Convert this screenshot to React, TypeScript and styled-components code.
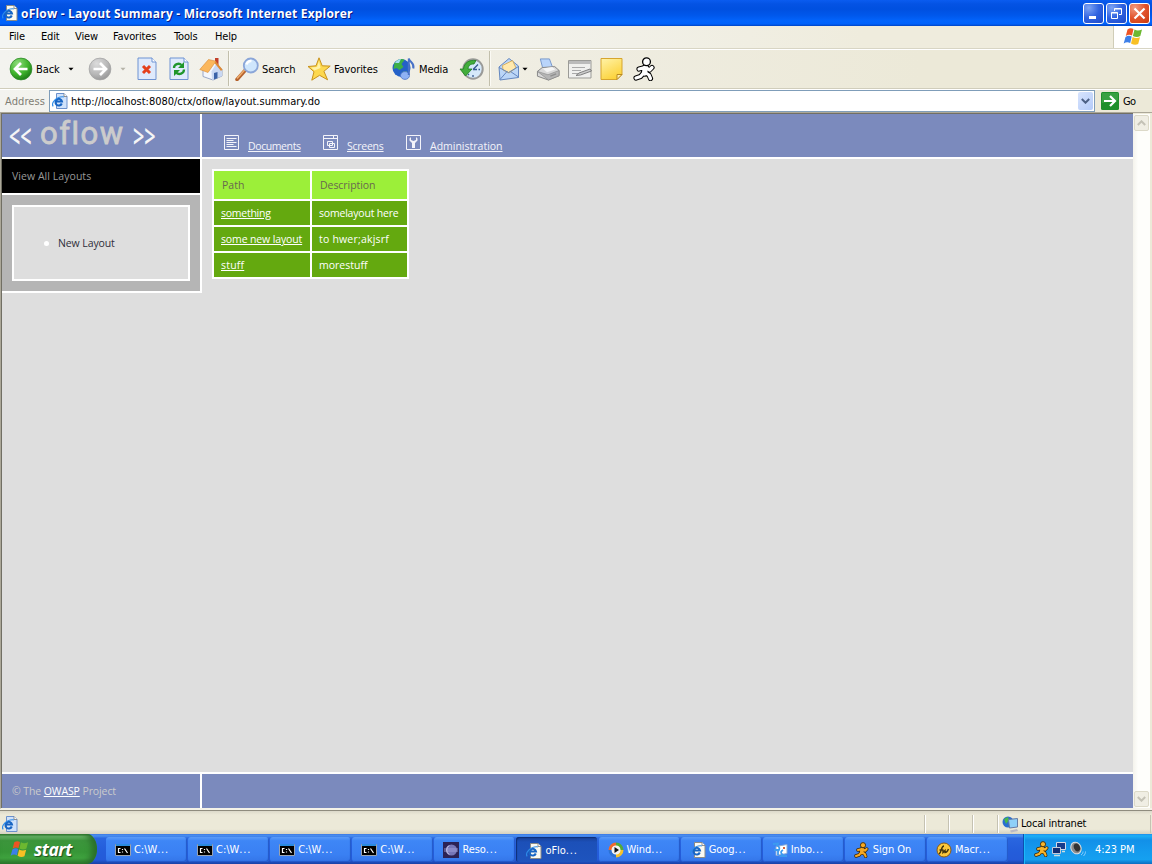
import React from "react";
import styled, { createGlobalStyle, css } from "styled-components";

const Global = createGlobalStyle`
  * { box-sizing: border-box; }
  body { margin: 0; background: #ece9d8; overflow: hidden; }
  svg { display: block; flex: none; }
`;

const ui = css`
  font-family: "DejaVu Sans Condensed", "DejaVu Sans", sans-serif;
  font-size: 11px;
  line-height: 14px;
  white-space: nowrap;
`;
const pageFont = css`
  font-family: "Open Sans", "Noto Sans", sans-serif;
  font-size: 10.5px;
  line-height: 14px;
  white-space: nowrap;
`;

const Screen = styled.div`
  width: 1152px; height: 864px; display: flex; flex-direction: column; overflow: hidden;
  ${ui}
`;

/* ---------- title bar ---------- */
const TitleBar = styled.header`
  height: 26px; flex: none; display: flex; align-items: center; padding: 0 2px 0 2px;
  background: linear-gradient(#0a5cf0 0, #0453e4 15%, #0050e0 35%, #0058ec 60%, #0264fc 80%, #0062fb 92%, #0044c4 100%);
`;
const Title = styled.h1`
  margin: 0 auto 0 3px; color: #fff; font: bold 12px/18px "Open Sans", sans-serif; letter-spacing: 0.2px;
  text-shadow: 1px 1px 0 #0a1883; white-space: nowrap; padding-top: 1px;
`;
const WinButton = styled.div<{ $close?: boolean }>`
  width: 21px; height: 21px; margin-left: 2px; border: 1px solid #fff; border-radius: 3px;
  background: ${p => p.$close
    ? "radial-gradient(circle at 25% 20%, #f09a80, #e2532c 50%, #c83a10)"
    : "radial-gradient(circle at 25% 20%, #7ea4f4, #2f62e0 50%, #1d49c8)"};
  display: flex; align-items: center; justify-content: center;
`;

/* ---------- menu ---------- */
const MenuBar = styled.nav`
  height: 22px; flex: none; display: flex; padding-left: 9px; align-items: center;
  background: linear-gradient(90deg, #f4f5f2, #f2f2ec 45%, #efecdd 75%); 
`;
const MenuItem = styled.span<{ $w: number }>`
  width: ${p => p.$w}px; letter-spacing: -0.15px;
`;
const Throbber = styled.div`
  margin-left: auto; width: 39px; height: 22px; background: #fff; border-left: 1px solid #d0cdb8;
  padding: 1px 0 0 9px;
`;

/* ---------- toolbar ---------- */
const ToolBar = styled.div`
  height: 41px; flex: none; display: flex; align-items: center; padding-left: 9px;
  border-top: 1px solid #d8d5c4; border-bottom: 1px solid #d0cdbb;
  background: linear-gradient(90deg, #f3f3ef, #f0eee4 40%, #ece9d8 80%);
  box-shadow: inset 0 1px #fff;
`;
const Tool = styled.div<{ $w: number }>`
  width: ${p => p.$w}px; display: flex; align-items: center; gap: 3px; letter-spacing: -0.1px; padding-top: 1px;
`;
const ToolText = styled.span`padding-top: 1px;`;
const Divider = styled.div<{ $w: number }>`
  width: ${p => p.$w}px; height: 35px; border-left: 1px solid #c2bfac; box-shadow: inset 1px 0 #fbfaf4;
`;
const CaretBox = styled.div<{ $w: number; $pad: number }>`
  width: ${p => p.$w}px; padding-left: ${p => p.$pad}px;
`;

/* ---------- address ---------- */
const AddressBar = styled.div`
  height: 23px; flex: none; display: flex; align-items: center; padding-left: 5px;
  background: linear-gradient(90deg, #f3f3ef, #ece9d8 60%); border-top: 1px solid #fff;
`;
const AddressLabel = styled.span`width: 44px; color: #7f7d73; padding-top: 2px; letter-spacing: 0.1px;`;
const AddressField = styled.div`
  width: 1046px; height: 22px; border: 1px solid #7f9db9; background: #fff; display: flex; align-items: center;
  padding: 0 1px 0 2px; gap: 3px; letter-spacing: -0.01px;
`;
const Url = styled.span`padding-top: 2px;`;
const DropButton = styled.div`
  margin-left: auto; width: 15px; height: 18px; border-radius: 2px;
  background: linear-gradient(135deg, #d8e4fd, #b4cbf9); display: flex; align-items: center; justify-content: center;
`;
const Go = styled.div`display: flex; align-items: center; gap: 4px; padding-left: 6px; letter-spacing: -0.6px;`;

/* ---------- document ---------- */
const Viewport = styled.div`
  height: 697px; flex: none; display: flex; border-left: 1px solid #aca899; border-top: 1px solid #aca899;
  border-bottom: 1px solid #f4f2e8; background: #ece9d8;
`;
const Page = styled.div`
  width: 1132px; height: 695px; display: grid; grid-template-columns: 198px 1fr; grid-template-rows: 43px 613px 34px;
  gap: 2px; background: #fff; border-left: 1px solid #716f64; border-top: 1px solid #716f64; ${pageFont}
`;
const Banner = styled.div`
  background: #7b8abd; display: flex; align-items: flex-start; color: #f4f4fa;
`;
const Chevrons = styled.span<{ $w: number; $pad: number }>`
  width: ${p => p.$w}px; padding: 6px 0 0 ${p => p.$pad}px; font: 600 22px/30px "Open Sans", sans-serif; color: #f5f5f5;
  span { display: inline-block; transform: scale(0.9, 1.5); transform-origin: 0 56%; }
`;
const Logo = styled.span`
  width: 93px; font: 400 31px/34px "Roboto", sans-serif; color: #ccc; padding: 3px 0 0 1px; letter-spacing: 1.5px;
  -webkit-text-stroke: 0.8px #ccc;
`;
const NavItem = styled.div<{ $w: number; $ls?: number }>`
  width: ${p => p.$w}px; display: flex; gap: 9px; padding-top: 21px;
  a { color: #f4f4fa; text-decoration: underline; margin-top: 4px; letter-spacing: ${p => p.$ls ?? 0}px; }
`;
const Side = styled.div`display: flex; flex-direction: column; background: #dedede; position: relative; z-index: 1;`;
const SideTitle = styled.div`
  height: 34px; width: 200px; background: #000; color: #999; padding: 10px 0 0 10px; letter-spacing: 0.05px;
  border-right: 2px solid #fff;
`;
const SidePanel = styled.div`
  height: 100px; width: 200px; background: #b5b5b5; border: solid #fff; border-width: 2px 2px 2px 0; padding: 10px;
`;
const SideBox = styled.ul`
  margin: 0; height: 76px; width: 178px; border: 2px solid #fff; background: #dedede; list-style: none;
  display: flex; align-items: center; padding: 0 0 0 30px; gap: 9px; color: #2e2e3a; letter-spacing: -0.1px;
  &::before { content: ""; width: 5px; height: 5px; border-radius: 50%; background: #fff; }
`;
const Main = styled.div`background: #dedede; padding: 10px; margin-left: -2px; padding-left: 12px;`;
const Grid = styled.div`
  display: inline-grid; grid-template-columns: 96px 95px; grid-template-rows: 28px 24px 24px 24px; gap: 2px;
  background: #fff; padding: 2px;
`;
const Cell = styled.div<{ $head?: boolean; $ls?: number }>`
  background: ${p => (p.$head ? "#9cef39" : "#64a90f")}; color: ${p => (p.$head ? "#68684f" : "#fff")};
  padding: 0 0 0 ${p => (p.$head ? 8 : 7)}px; display: flex; align-items: center;
  letter-spacing: ${p => p.$ls ?? 0}px;
  a { color: #fff; text-decoration: underline; }
`;
const Foot = styled.div`
  background: #7b8abd; color: #ccc; padding: 10px 0 0 10px; letter-spacing: -0.1px;
  a { color: #fff; text-decoration: underline; }
`;
const ScrollBar = styled.div`
  width: 17px; height: 694px; background: linear-gradient(90deg, #f4f3ec, #fefefb 30%); display: flex; flex-direction: column;
  justify-content: space-between; padding: 1px; margin-top: 1px;
`;
const ScrollButton = styled.div`
  width: 15px; height: 16px; border: 1px solid #dcd9c8; border-radius: 2px; background: #f0eee4;
  display: flex; align-items: center; justify-content: center;
`;

/* ---------- status bar ---------- */
const StatusBar = styled.div`
  height: 25px; flex: none; display: flex; align-items: center; padding: 4px 1px 0 2px; 
  border-top: 1px solid #f4f2e8; box-shadow: inset 0 1px #8f8c7e;
  background: linear-gradient(#d8d5c6 0, #ece9d8 20%, #ece9d8 80%, #d4d1c0 100%);
`;
const Pane = styled.div<{ $w: number; $push?: boolean }>`
  width: ${p => p.$w}px; height: 18px; border-left: 1px solid #c5c2b2; box-shadow: inset 1px 0 #fff;
  margin-left: ${p => (p.$push ? "auto" : 0)}; display: flex; align-items: center; padding-left: ${p => (p.$w > 2 ? 4 : 0)}px;
  gap: 2px; letter-spacing: -0.2px;
`;

/* ---------- task bar ---------- */
const TaskBar = styled.footer`
  height: 30px; flex: none; display: flex; color: #fff;
  background: linear-gradient(#3a78e4 0, #4a90f0 6%, #2a66e0 14%, #245edb 50%, #245ad8 86%, #1941a5 100%);
`;
const Start = styled.div`
  width: 97px; height: 30px; border-radius: 0 10px 10px 0 / 0 15px 15px 0; margin-right: 9px;
  background: linear-gradient(#2f7c2f 0, #6cb96c 8%, #3c953c 22%, #379637 60%, #3fa33f 80%, #2c7a2c 100%);
  box-shadow: inset -5px 0 6px #2a6e2a; display: flex; align-items: center; padding-left: 10px; gap: 5px;
  font: italic bold 17.5px/22px "Open Sans", sans-serif; letter-spacing: -0.5px; text-shadow: 1px 1px 1px #1d4d1d;
`;
const Task = styled.div<{ $active?: boolean }>`
  width: 81px; height: 25px; margin: 3px 1.1px 0 0; border-radius: 3px; display: flex; align-items: center; gap: 3px;
  padding: ${p => (p.$active ? "2px 0 0 10px" : "0 0 0 9px")}; letter-spacing: -0.05px;
  background: ${p => (p.$active
    ? "linear-gradient(#173f94, #1c50b8 20%, #1e54be)"
    : "linear-gradient(#5a9bf8 0, #3e86f6 15%, #3a80f3 70%, #3475e8 100%)")};
  box-shadow: ${p => (p.$active ? "inset 1px 1px 1px #0e2f77" : "inset -1px -1px 1px #2358c8")};
`;
const Dots = styled.span`letter-spacing: 0.8px;`;
const Tray = styled.div`
  margin-left: auto; width: 129px; height: 30px; display: flex; align-items: center; padding-left: 10px; gap: 1px;
  background: linear-gradient(#1c8bea 0, #1cb0f6 6%, #1290e8 20%, #149bee 60%, #15a0f0 85%, #0d6cc0 100%);
  border-left: 1px solid #0c4fb0; box-shadow: inset 1px 0 #1bb9fb;
`;
const Clock = styled.span`margin-left: 8px; padding-top: 1px; letter-spacing: -0.05px;`;

/* ---------- icons ---------- */
const Caret = ({ c = "#000" }: { c?: string }) => (
  <svg width="6" height="4" viewBox="0 0 7 4"><path d="M0.5 0.5h6L3.5 3.7z" fill={c} /></svg>
);
const IEIcon = ({ s = 16, blue }: { s?: number; blue?: boolean }) => (
  <svg width={s} height={s} viewBox="0 0 16 16">
    <path d="M4.500 .5h7.500l3 3v12h-10.500z" fill={blue ? "#cfe2fb" : "#fbfaf2"} stroke={blue ? "#6a90cc" : "#8b8b87"} />
    <path d="M12 .5v3h3" fill="#fff" stroke="#777" strokeWidth=".8" />
    <path d="M9.800 10.500A3.300 3.300 0 1 1 10 8.500H4" fill="none" stroke="#1765c4" strokeWidth="2" />
    <path d="M1.200 13.300C-1 10.500 4 3 11.800 3.800" fill="none" stroke="#2d8be8" strokeWidth="1.200" />
  </svg>
);
const Flag = ({ w = 20 }: { w?: number }) => (
  <svg width={w} height={w * 0.95} viewBox="0 0 20 19">
    <path d="M4.500 2.500C6.500 .8 8.500 1 10.500 2L9 8.500C7 7.500 5 7.500 2.800 9z" fill="#ee5423" />
    <path d="M11.500 2.500C14 4 16 3.800 19 2.500L17.300 9C15 10.200 12.500 10.200 9.900 8.900z" fill="#6cb830" />
    <path d="M2.500 10C4.500 8.500 6.700 8.500 8.700 9.500L7.200 16C5 15 3 15 .7 16.500z" fill="#3d7fe8" />
    <path d="M9.600 10C12 11.300 14.500 11.300 17 10.200L15.200 17C13 18.200 10.500 18 8 16.500z" fill="#f8c024" />
  </svg>
);
const CircleArrow = ({ green, flip }: { green?: boolean; flip?: boolean }) => (
  <svg width="24" height="24" viewBox="0 0 24 24">
    <defs><radialGradient id={green ? "cg" : "cx"} cx=".35" cy=".25" r=".8">
      <stop offset="0" stopColor={green ? "#8fdc7c" : "#dcdcdc"} /><stop offset=".6" stopColor={green ? "#3fb42c" : "#b9b9b9"} />
      <stop offset="1" stopColor={green ? "#1c7a16" : "#969696"} />
    </radialGradient></defs>
    <circle cx="12" cy="12" r="10.900" fill={`url(#${green ? "cg" : "cx"})`} stroke={green ? "#2f8a2a" : "#a5a5a5"} strokeWidth=".8" />
    <path d="M12 6l-6 6 6 6M6.500 12H18.500" fill="none" stroke="#fff" strokeWidth="2.700" transform={flip ? "translate(24 0) scale(-1 1)" : undefined} />
  </svg>
);
const Sheet = ({ children }: { children: React.ReactNode }) => (
  <svg width="20" height="24" viewBox="0.5 0 20 24">
    <path d="M1.500 1h14l4 4v17.500h-18z" fill="#dfeafc" stroke="#6f93d2" />
    <path d="M15.500 1v4h4" fill="#fff" stroke="#6f93d2" />{children}
  </svg>
);
const Home = () => (
  <svg width="25" height="24" viewBox="0 0 25 24">
    <path d="M16 1h3.500v9H16z" fill="#c2402a" />
    <path d="M4 13l12-8 7 7.500v6.500l-9 4L4 19.500z" fill="#f3f6fd" stroke="#8494ba" strokeWidth=".8" />
    <path d="M12.500 14.500L17 7l6 6v6l-10 4z" fill="#c9d8f3" />
    <path d="M16.500 4l7 8.500-1.500 1.500-6.500-8z" fill="#e08b35" />
    <path d="M.8 12.500L9.500 2.500 17 4.200 9 15.500z" fill="#fbb75c" stroke="#d98a34" strokeWidth=".6" />
    <path d="M15 16l3.500-1v6.300L15 22.500z" fill="#3b62a8" />
  </svg>
);
const SearchIcon = () => (
  <svg width="24" height="24" viewBox="0 0 24 24">
    <path d="M2 22.500l8-9" stroke="#b5622d" strokeWidth="3.500" strokeLinecap="round" />
    <path d="M2 21.500l8-9" stroke="#efae6e" strokeWidth="1.500" />
    <circle cx="15.800" cy="8.500" r="7" fill="#cfe6fc" stroke="#8ba6d8" strokeWidth="1.800" />
    <path d="M11.500 7.500a4.500 4.500 0 0 1 5-3.500" stroke="#fff" strokeWidth="2.400" fill="none" />
  </svg>
);
const Star = () => (
  <svg width="24" height="24" viewBox="0 0 24 24">
    <path d="M12 .8l3.200 8 8 .3-6.300 5.200 3.700 8.500-8-4.500L4.800 23.200 7 14.700 1 9.500l8-.7z" fill="#fdd84f" stroke="#c8921c" />
    <path d="M12 4l1.500 7-6 2.500L4 10.500l6-.5z" fill="#fff2a8" />
  </svg>
);
const Media = () => (
  <svg width="24" height="24" viewBox="0 0 24 24">
    <circle cx="9.500" cy="11" r="9" fill="#2461c8" />
    <path d="M2.500 6c3-4 8-5 10-3l-3 4 2 3-4 3-3-2-3 1zM10 15l5-1-1 5-4 1z" fill="#3daf45" />
    <path d="M3 6c1-2 4-4 6-4l-2 4z" fill="#a3dcf2" />
    <ellipse cx="13" cy="18.500" rx="4.500" ry="3.900" fill="#8fb2f4" stroke="#4d74c4" strokeWidth=".8" />
    <path d="M16.800 18V1.500c1 4 6 4 4.500 10" stroke="#4972c8" strokeWidth="2" fill="none" />
  </svg>
);
const History = () => (
  <svg width="25" height="24" viewBox="0 0 25 24">
    <circle cx="14" cy="12" r="9.700" fill="#d6e9fa" stroke="#9a9a98" strokeWidth="2" />
    <path d="M14 12.500l5-5M14 12.500h4M14 4v2M14 18v2M21 12.500h-1.500M9 18l1-1" stroke="#375a92" strokeWidth="1.300" />
    <path d="M1 12h3.500C5 6 10 2.500 17 3.500L15 7c-4 0-5.500 1.500-6 5h4l-6.500 7z" fill="#43ad3c" stroke="#1f7d22" strokeWidth=".8" />
  </svg>
);
const Mail = () => (
  <svg width="24" height="24" viewBox="0 0 24 24">
    <path d="M2 10L12 1.500 21.500 9v11.500L3 23z" fill="#bbd6f7" stroke="#6487bf" />
    <path d="M5.500 8.500l10-5L19 11l-7 5-6-3z" fill="#ffe9ae" stroke="#d4a548" strokeWidth=".8" />
    <path d="M2 10.500l9.500 5 10-6M3 22.500l7-8M21.500 20l-8-5.500" stroke="#6487bf" fill="none" />
  </svg>
);
const Printer = () => (
  <svg width="24" height="24" viewBox="0 0 25 24">
    <path d="M4.500 1.500h9.500l3.500 9.500-10 2z" fill="#b9d4fa" stroke="#7798cc" />
    <path d="M1.500 14.500l5-4 13-1 4.500 4v5.500l-11 4.500-11.500-4z" fill="#d9d9d9" stroke="#858585" />
    <path d="M1.500 14.500l11 3.500 11.500-4.500v5.500l-11 4.500z" fill="#b5b5b5" stroke="#858585" strokeWidth=".6" />
    <path d="M7 11.500l10-1.500 3 2.500-8.500 3z" fill="#f5f5f5" />
    <path d="M15 19.500l6-2.500" stroke="#8f8f8f" strokeWidth="1.500" />
  </svg>
);
const Edit = () => (
  <svg width="24" height="24" viewBox="0 0 24 24">
    <path d="M.5 3.500h22.500v17.500H.5z" fill="#f0f0ee" stroke="#9b9b97" /><path d="M1 4h22v3H1z" fill="#bbb" />
    <path d="M4 10.500h13M4 13.500h9M4 16.500h6" stroke="#aaa" /><path d="M8 18.500l3-2.500 11-4 1.500 2-11 4z" fill="#ccc" stroke="#777" strokeWidth=".9" />
  </svg>
);
const Note = () => (
  <svg width="24" height="24" viewBox="0.5 0 24 24">
    <defs><linearGradient id="nt" x2=".5" y2="1"><stop stopColor="#fff3a8" /><stop offset="1" stopColor="#fcd33c" /></linearGradient></defs>
    <path d="M1.500 1.500h21v16l-5 5h-16z" fill="url(#nt)" stroke="#d6a52e" /><path d="M22.500 17.500h-5v5z" fill="#fff0b0" stroke="#b98a22" />
  </svg>
);
const Runner = ({ s, fill, line }: { s: number; fill: string; line: string }) => (
  <svg width={s} height={s} viewBox="0 0 24 24">
    <g strokeLinecap="round" strokeLinejoin="round" fill="none">
      {([[line, 5.2], [fill, 3.2]] as [string, number][]).map(([c, w]) => (
        <g key={c} stroke={c} strokeWidth={w}>
          <path d="M11.500 11l-.5 5.500M12 10.500L6 12M13 10.500l3.500 2.500 2.500-2.500M10.500 16l-3 3.500-4.500 1.500M12 15.500l4 2.500 1.500 3.500" />
          <path d="M12.500 11l-1 5" strokeWidth={w + 2} />
        </g>
      ))}
    </g>
    <circle cx="13.500" cy="4.800" r="3.900" fill={fill} stroke={line} strokeWidth="1.300" />
  </svg>
);
const Chevron = ({ up, c, w = 2 }: { up?: boolean; c: string; w?: number }) => (
  <svg width="9" height="6" viewBox="0 0 9 6"><path d={up ? "M.8 5L4.500 1.300 8.200 5" : "M.8 1L4.500 4.700 8.200 1"} fill="none" stroke={c} strokeWidth={w} /></svg>
);
const Cmd = () => (
  <svg width="16" height="16" viewBox="0 0 16 16">
    <path d="M.5 2.500h15v11H.5z" fill="#000" stroke="#9aa3b0" /><path d="M1 2h14v2H1z" fill="#2a8ae0" />
    <path d="M5.500 6.500h-2v4h2M7.500 7v1M7.500 9.500v1M9.500 6.500l3 4.500" stroke="#fff" fill="none" strokeWidth="1.200" />
  </svg>
);
const Eclipse = () => (
  <svg width="16" height="16" viewBox="0 0 16 16"><path d="M0 0h16v16H0z" fill="#2c2255" />
    <circle cx="8.500" cy="8" r="5.500" fill="#7676b8" /><path d="M6 3.500a5.500 5.500 0 0 0 0 9" stroke="#d9d9f2" fill="none" />
    <path d="M1 7h14M1 9h14" stroke="#aaaadf" strokeWidth=".8" /></svg>
);
const Player = () => (
  <svg width="16" height="16" viewBox="0 0 16 16"><circle cx="8" cy="8" r="6" fill="#fff" />
    <g fill="none" strokeWidth="3"><path d="M2 8a6 6 0 0 1 6-6" stroke="#f06a2c" /><path d="M8 2a6 6 0 0 1 6 6" stroke="#54aa38" />
      <path d="M14 8a6 6 0 0 1-6 6" stroke="#f4c22c" /><path d="M8 14a6 6 0 0 1-6-6" stroke="#2c72d4" /></g>
    <circle cx="8" cy="8" r="4" fill="#f2f2f2" /><path d="M6.500 5l4.500 3-4.500 3z" fill="#111" /></svg>
);
const Outlook = () => (
  <svg width="16" height="16" viewBox="0 0 16 16"><path d="M4 4.500l11-2v9l-11 2z" fill="#fff" stroke="#87a9d8" /><path d="M11 5h2v2h-2z" fill="#d9623b" />
    <path d="M1 2l5-.5-1 2c3 1 3 4 1 6M2 8l4 0v5M15 14H9l1.500-1.500C8 11 9 9 11 8" fill="none" stroke="#3c9af0" strokeWidth="1.800" /></svg>
);
const Fireworks = () => (
  <svg width="16" height="16" viewBox="0 0 16 16"><circle cx="8" cy="8" r="7" fill="#fbc73a" stroke="#8a5a10" />
    <path d="M3 12C6 10 5 4 8 4M3.500 8h4M7 8v2.500l2-2v2c2 0 2.500-1 3.500-3.500" fill="none" stroke="#42330a" strokeWidth="1.400" /></svg>
);
const Network = ({ s = 16 }: { s?: number }) => (
  <svg width={s} height={s} viewBox="0 0 16 16"><path d="M5.500 1.500h9v7h-9z" fill="#173c8c" stroke="#d5dbe8" />
    <path d="M1.500 6.500h8v6h-8z" fill="#122f74" stroke="#c4cbd8" /><path d="M3 14.500h6M11 10.500h3" stroke="#cdd" strokeWidth="1.500" /></svg>
);
const Speaker = () => (
  <svg width="18" height="16" viewBox="0 0 18 16"><ellipse cx="8" cy="7" rx="5" ry="6" transform="rotate(-25 8 7)" fill="#8b8b8b" stroke="#e0e0e0" />
    <ellipse cx="9" cy="6.500" rx="3" ry="4" transform="rotate(-25 9 6.500)" fill="#333" /><path d="M13 14c1.500-1 2-2 2-3.500M15.500 15c1.500-1.500 2-3 2-4.500" stroke="#8fd0ff" fill="none" /></svg>
);
const GlobePc = () => (
  <svg width="17" height="17" viewBox="0 0 17 17"><circle cx="6" cy="6" r="5.500" fill="#2a6ed0" /><path d="M2 3l4-2 1 3-3 4z" fill="#49b84a" />
    <path d="M6.500 3.500l9-1v8.500l-8 1z" fill="#8ed0f8" stroke="#667ba5" /><path d="M8 14.500l7-1.500 1 2-7 1.500z" fill="#b9b9c4" /></svg>
);

const Square = ({ children }: { children: React.ReactNode }) => (
  <svg width="15" height="15" viewBox="0 0 15 15" fill="none" stroke="#f4f4fa"><path d="M.5.5h14v14H.5z" />{children}</svg>
);

const menus: [string, number][] = [["File", 32], ["Edit", 34], ["View", 38], ["Favorites", 61], ["Tools", 41], ["Help", 40]];
const rows: [string, number, string, number][] = [
  ["something", -0.25, "somelayout here", -0.2],
  ["some new layout", -0.13, "to hwer;akjsrf", 0.2],
  ["stuff", 0.2, "morestuff", 0],
];
const tasks: [React.ReactNode, string][] = [
  [<Cmd />, "C:\\W..."], [<Cmd />, "C:\\W..."], [<Cmd />, "C:\\W..."], [<Cmd />, "C:\\W..."],
  [<Eclipse />, "Reso..."], [<IEIcon />, "oFlo..."], [<Player />, "Wind..."], [<IEIcon />, "Goog..."],
  [<Outlook />, "Inbo..."], [<Runner s={16} fill="#f7a823" line="#3a2505" />, "Sign On"], [<Fireworks />, "Macr..."],
];

export default function App() {
  return (
    <Screen>
      <Global />
      <TitleBar>
        <IEIcon />
        <Title>oFlow - Layout Summary - Microsoft Internet Explorer</Title>
        <WinButton><svg width="13" height="13"><path d="M2 9h7v3H2z" fill="#fff" /></svg></WinButton>
        <WinButton><svg width="13" height="13" fill="none" stroke="#fff"><path d="M4.500 4V1.500h7v6H9M4.500 2h7M1.500 5.500h6v6h-6zM1.500 6h6" /></svg></WinButton>
        <WinButton $close><svg width="13" height="13"><path d="M1.500 1.500l10 10M11.500 1.500l-10 10" stroke="#fff" strokeWidth="2.200" /></svg></WinButton>
      </TitleBar>
      <MenuBar>
        {menus.map(([t, w]) => <MenuItem key={t} $w={w}>{t}</MenuItem>)}
        <Throbber><Flag /></Throbber>
      </MenuBar>
      <ToolBar>
        <Tool $w={55}><CircleArrow green /><ToolText>Back</ToolText></Tool>
        <CaretBox $w={24} $pad={4}><Caret /></CaretBox>
        <Tool $w={31}><CircleArrow flip /></Tool>
        <CaretBox $w={18} $pad={1}><Caret c="#b5b3a8" /></CaretBox>
        <Tool $w={32}><Sheet><path d="M6.500 9l7 7M13.500 9l-7 7" stroke="#e5401c" strokeWidth="3" /></Sheet></Tool>
        <Tool $w={30}><Sheet><path d="M5.500 11c0-4 5-5.500 7.500-3M15.500 12.500c0 4-5 6-8 3" fill="none" stroke="#1f962c" strokeWidth="2.300" /><path d="M15.500 5v6h-6zM5.500 19v-6h6z" fill="#1f962c" /></Sheet></Tool>
        <Tool $w={29}><Home /></Tool>
        <Divider $w={7} />
        <Tool $w={72}><SearchIcon /><ToolText>Search</ToolText></Tool>
        <Tool $w={85}><Star /><ToolText>Favorites</ToolText></Tool>
        <Tool $w={67}><Media /><ToolText>Media</ToolText></Tool>
        <Tool $w={30}><History /></Tool>
        <Divider $w={8} />
        <Tool $w={25}><Mail /></Tool>
        <CaretBox $w={14} $pad={0}><Caret /></CaretBox>
        <Tool $w={32}><Printer /></Tool>
        <Tool $w={32}><Edit /></Tool>
        <Tool $w={33}><Note /></Tool>
        <Tool $w={32}><Runner s={24} fill="#fff" line="#000" /></Tool>
      </ToolBar>
      <AddressBar>
        <AddressLabel>Address</AddressLabel>
        <AddressField>
          <IEIcon blue /><Url>http://localhost:8080/ctx/oflow/layout.summary.do</Url>
          <DropButton><Chevron c="#4d6185" /></DropButton>
        </AddressField>
        <Go>
          <svg width="18" height="18" viewBox="0 0 18 18"><rect width="18" height="18" rx="1.500" fill="#1f8f2b" /><path d="M1 1h16v7L1 11z" fill="#49ad50" opacity=".6" />
            <path d="M3 9h11M9 4l5 5-5 5" fill="none" stroke="#fff" strokeWidth="2.200" /></svg><Url>Go</Url>
        </Go>
      </AddressBar>
      <Viewport>
        <Page>
          <Banner>
            <Chevrons $w={37} $pad={7}><span>&lt;&lt;</span></Chevrons>
            <Logo>oflow</Logo>
            <Chevrons $w={40} $pad={1}><span>&gt;&gt;</span></Chevrons>
          </Banner>
          <Banner>
            <NavItem $w={22} />
            <NavItem $w={99} $ls={-0.4}><Square><path d="M2.500 3.500h10M2.500 5.500h7M2.500 7.500h10M2.500 9.500h7M2.500 11.500h10" /></Square><a>Documents</a></NavItem>
            <NavItem $w={83} $ls={-0.25}><Square><path d="M1 3.500h13M10.500 1v2M4.500 6.500h5v4h-5zM6.500 8.500h5v4h-5z" /></Square><a>Screens</a></NavItem>
            <NavItem $w={130}><Square><path d="M5 2L3.500 3.500v2L6 8v5h3V8l2.500-2.500v-2L10 2v3L7.500 6 5 5z" fill="#f4f4fa" stroke="none" /></Square><a>Administration</a></NavItem>
          </Banner>
          <Side>
            <SideTitle>View All Layouts</SideTitle>
            <SidePanel><SideBox><li>New Layout</li></SideBox></SidePanel>
          </Side>
          <Main>
            <Grid>
              <Cell $head>Path</Cell><Cell $head $ls={-0.05}>Description</Cell>
              {rows.map(([path, pathLs, text, textLs]) => (
                <React.Fragment key={path}>
                  <Cell $ls={pathLs}><a>{path}</a></Cell>
                  <Cell $ls={textLs}>{text}</Cell>
                </React.Fragment>
              ))}
            </Grid>
          </Main>
          <Foot>© The <a>OWASP</a> Project</Foot>
          <Foot />
        </Page>
        <ScrollBar>
          <ScrollButton><Chevron up c="#c4c2b6" /></ScrollButton>
          <ScrollButton><Chevron c="#c4c2b6" /></ScrollButton>
        </ScrollBar>
      </Viewport>
      <StatusBar>
        <IEIcon blue />
        <Pane $w={24} $push /><Pane $w={24} /><Pane $w={25} />
        <Pane $w={153}><GlobePc />Local intranet</Pane><Pane $w={1} />
      </StatusBar>
      <TaskBar>
        <Start><Flag w={19} />start</Start>
        {tasks.map(([icon, t], i) => (
          <Task key={i} $active={i === 5}>
            {icon}
            <span>{t.replace("...", "")}{t.endsWith("...") && <Dots>...</Dots>}</span>
          </Task>
        ))}
        <Tray><Runner s={16} fill="#f7b52c" line="#3a2505" /><Network /><Speaker /><Clock>4:23 PM</Clock></Tray>
      </TaskBar>
    </Screen>
  );
}
